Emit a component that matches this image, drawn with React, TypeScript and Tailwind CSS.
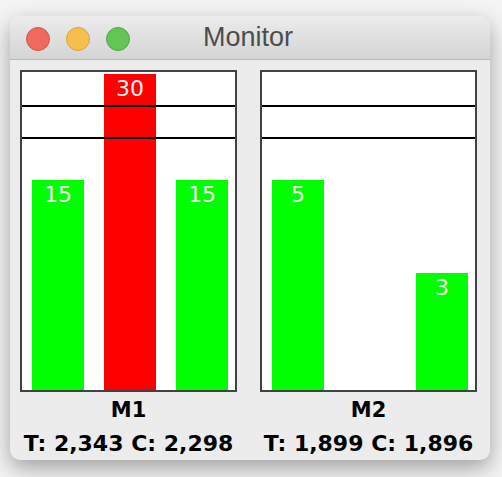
const sans = { fontFamily: '"DejaVu Sans", sans-serif' }

interface Bar {
  value: number | null
  height: number
  red?: boolean
}

const machines: { name: string; stats: string; bars: Bar[] }[] = [
  {
    name: 'M1',
    stats: 'T: 2,343 C: 2,298',
    bars: [
      { value: 15, height: 210 },
      { value: 30, height: 316, red: true },
      { value: 15, height: 210 },
    ],
  },
  {
    name: 'M2',
    stats: 'T: 1,899 C: 1,896',
    bars: [
      { value: 5, height: 210 },
      { value: null, height: 0 },
      { value: 3, height: 117 },
    ],
  },
]

function Chart({ bars }: { bars: Bar[] }) {
  return (
    <div className="relative w-[217px] h-[322px] border-2 border-[#424242] bg-white">
      <div className="flex items-end h-full pl-[10px] gap-[20px]">
        {bars.map((b, i) =>
          b.value === null ? (
            <div key={i} className="w-[52px]" />
          ) : (
            <div
              key={i}
              className={`w-[52px] text-center text-[22px] leading-[24px] pt-[3px] text-[#f2f2f2] ${b.red ? 'bg-[#ff0000]' : 'bg-[#00ff00]'}`}
              style={{ height: b.height }}
            >
              {b.value}
            </div>
          )
        )}
      </div>
      {/* threshold lines */}
      <div className="absolute left-0 right-0 top-[33px] h-[2px] bg-black" />
      <div className="absolute left-0 right-0 top-[65px] h-[2px] bg-black" />
    </div>
  )
}

export default function App() {
  return (
    <div className="w-[502px] h-[477px] bg-[#f4f4f4] pt-[16px] pl-[10px]" style={sans}>
      <div className="w-[480px] h-[444px] rounded-[10px] bg-[#ececec] overflow-hidden shadow-[0_8px_22px_rgba(0,0,0,0.35)]">

        {/* ── Title bar ── */}
        <div className="relative h-[44px] flex items-center justify-center bg-gradient-to-b from-[#ececec] to-[#d4d4d4] border-b border-[#b8b8b8]">
          <div className="absolute left-[16px] top-[11px] flex gap-[16px]">
            <span className="w-[24px] h-[24px] rounded-full bg-[#ee6a5f] border border-[#d5564b]" />
            <span className="w-[24px] h-[24px] rounded-full bg-[#f5bf4f] border border-[#d9a33a]" />
            <span className="w-[24px] h-[24px] rounded-full bg-[#62c654] border border-[#4fa940]" />
          </div>
          <span className="text-[27px] text-[#4d4d4d] -ml-[4px]" style={{ fontFamily: '"Liberation Sans", sans-serif' }}>
            Monitor
          </span>
        </div>

        {/* ── Charts ── */}
        <div className="flex gap-[23px] pl-[10px] pt-[10px]">
          {machines.map(m => (
            <div key={m.name} className="flex flex-col items-center w-[217px]">
              <Chart bars={m.bars} />
              <div className="mt-[5px] text-[21px] leading-[26px] font-bold text-black">{m.name}</div>
              <div className="mt-[8px] text-[22px] leading-[26px] font-bold text-black whitespace-nowrap">{m.stats}</div>
            </div>
          ))}
        </div>
      </div>
    </div>
  )
}
